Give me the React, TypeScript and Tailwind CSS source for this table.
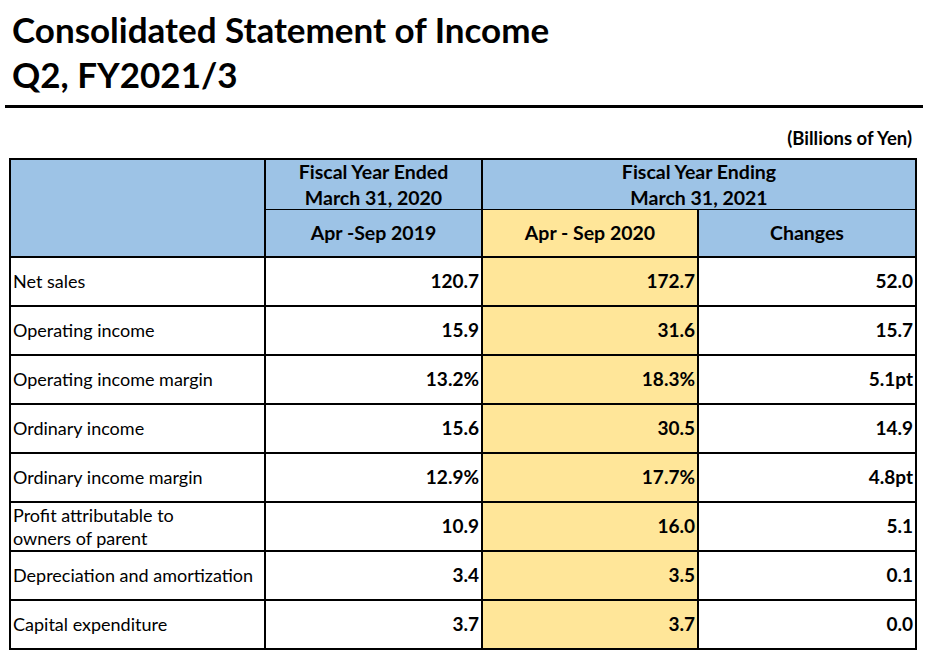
const rows: { label: string; prev: string; curr: string; diff: string }[] = [
  { label: "Net sales", prev: "120.7", curr: "172.7", diff: "52.0" },
  { label: "Operating income", prev: "15.9", curr: "31.6", diff: "15.7" },
  { label: "Operating income margin", prev: "13.2%", curr: "18.3%", diff: "5.1pt" },
  { label: "Ordinary income", prev: "15.6", curr: "30.5", diff: "14.9" },
  { label: "Ordinary income margin", prev: "12.9%", curr: "17.7%", diff: "4.8pt" },
  { label: "Profit attributable to\nowners of parent", prev: "10.9", curr: "16.0", diff: "5.1" },
  { label: "Depreciation and amortization", prev: "3.4", curr: "3.5", diff: "0.1" },
  { label: "Capital expenditure", prev: "3.7", curr: "3.7", diff: "0.0" },
];

export default function App() {
  return (
    <div className="w-[928px] h-[653px] bg-white text-black overflow-hidden" style={{ fontFamily: "Lato, 'Open Sans', sans-serif" }}>
      {/* 标题 */}
      <div className="pt-[7px] pl-[12px]">
        <h1 className="text-[35px] leading-[45px] font-bold">Consolidated Statement of Income</h1>
        <h2 className="text-[35px] leading-[45px] font-bold">Q2, FY2021/3</h2>
      </div>
      <div className="mt-[8px] mx-[5px] h-[3px] bg-black" />

      <div className="mt-[20px] w-[912px] text-right text-[18.5px] leading-[20px] font-bold">(Billions of Yen)</div>

      {/* 表 */}
      <table className="mt-[10px] ml-[9px] w-[906px] table-fixed border-collapse border-2 border-black">
        <colgroup>
          <col className="w-[255px]" />
          <col className="w-[217px]" />
          <col className="w-[216px]" />
          <col className="w-[218px]" />
        </colgroup>
        <thead>
          <tr className="h-[50px]">
            <th rowSpan={2} className="bg-[#9dc3e6] border-2 border-black" />
            <th className="bg-[#9dc3e6] border-2 border-black border-b p-0 text-[19.5px] font-bold text-center align-top">
              <div className="h-[46px] leading-[26px] -mt-[1px]">Fiscal Year Ended<br />March 31, 2020</div>
            </th>
            <th colSpan={2} className="bg-[#9dc3e6] border-2 border-black border-b p-0 text-[19.5px] font-bold text-center align-top">
              <div className="h-[46px] leading-[26px] -mt-[1px]">Fiscal Year Ending<br />March 31, 2021</div>
            </th>
          </tr>
          <tr className="h-[48px]">
            <th className="bg-[#9dc3e6] border-2 border-black border-t text-[19.5px] font-bold text-center">Apr -Sep 2019</th>
            <th className="bg-[#ffe699] border-2 border-black border-t text-[19.5px] font-bold text-center">Apr - Sep 2020</th>
            <th className="bg-[#9dc3e6] border-2 border-black border-t text-[19.5px] font-bold text-center">Changes</th>
          </tr>
        </thead>
        <tbody>
          {rows.map((r) => (
            <tr key={r.label} className="h-[49px]">
              <td className="border-2 border-black pl-[2px] text-[18px] leading-[23px] whitespace-pre-line align-middle">{r.label}</td>
              <td className="border-2 border-black pr-[2px] text-right text-[19px] font-bold">{r.prev}</td>
              <td className="border-2 border-black bg-[#ffe699] pr-[2px] text-right text-[19px] font-bold">{r.curr}</td>
              <td className="border-2 border-black pr-[2px] text-right text-[19px] font-bold">{r.diff}</td>
            </tr>
          ))}
        </tbody>
      </table>
    </div>
  );
}
